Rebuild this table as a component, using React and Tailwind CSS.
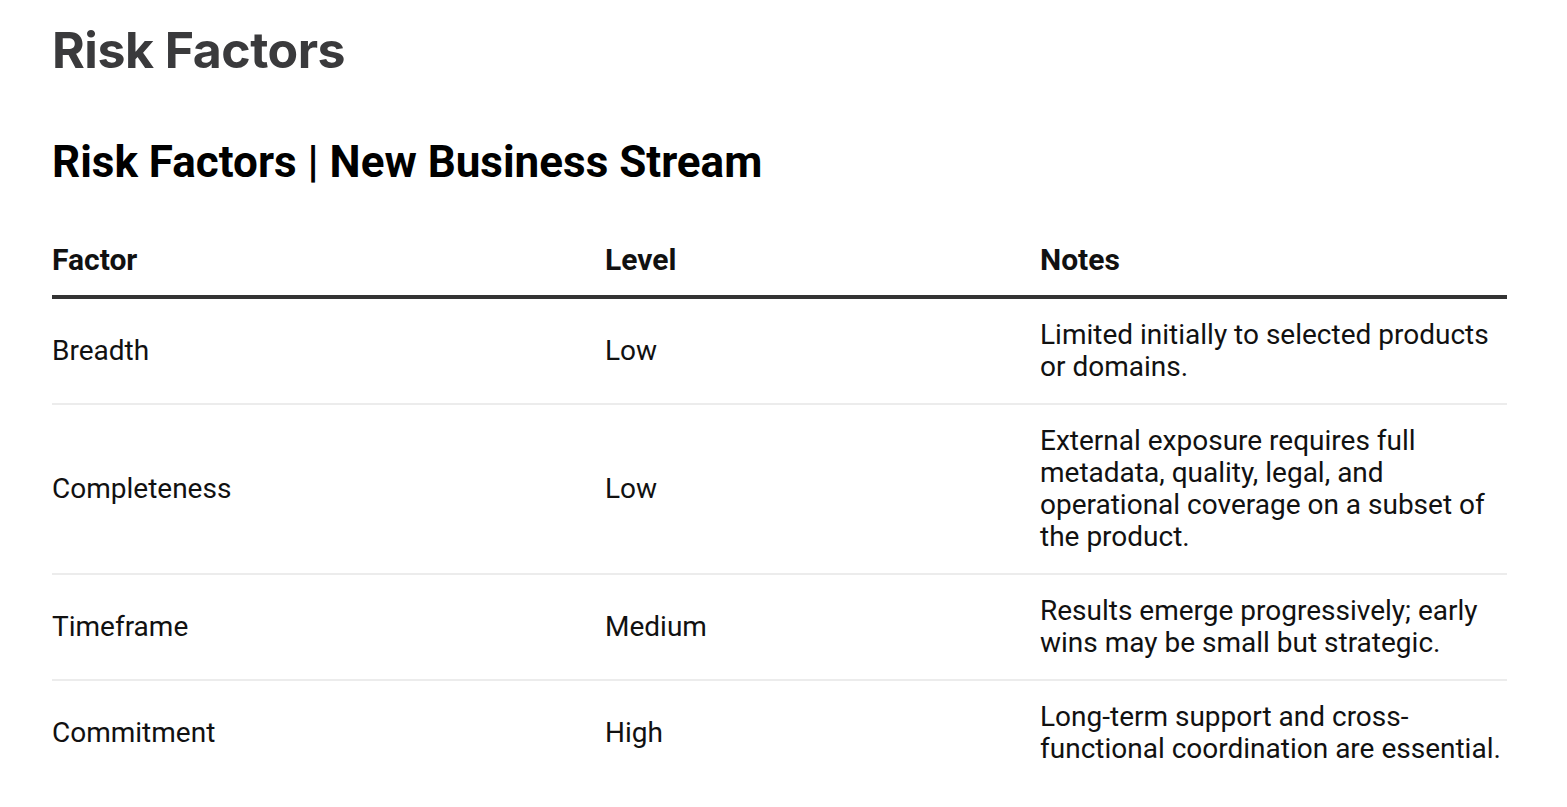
const rows = [
  {
    factor: "Breadth",
    level: "Low",
    notes: "Limited initially to selected products or domains.",
  },
  {
    factor: "Completeness",
    level: "Low",
    notes:
      "External exposure requires full metadata, quality, legal, and operational coverage on a subset of the product.",
  },
  {
    factor: "Timeframe",
    level: "Medium",
    notes: "Results emerge progressively; early wins may be small but strategic.",
  },
  {
    factor: "Commitment",
    level: "High",
    notes: "Long-term support and cross-functional coordination are essential.",
  },
];

const App = () => {
  return (
    <div className="w-full min-h-screen bg-white px-[52px] pt-[22px] font-['Roboto',sans-serif]">
      <h1 className="text-[50px] leading-[56px] font-bold text-[#3a3a3c] font-['Inter',sans-serif] tracking-[-0.5px]">
        Risk Factors
      </h1>

      <h2 className="mt-[58px] text-[44px] leading-[52px] font-bold text-black">
        Risk Factors | New Business Stream
      </h2>

      <table className="mt-[44px] w-[1455px] border-collapse text-[28px] leading-[32px] text-[#111]">
        <colgroup>
          <col className="w-[553px]" />
          <col className="w-[435px]" />
          <col className="w-[467px]" />
        </colgroup>
        <thead>
          {/* header rule is thick and dark */}
          <tr className="border-b-[4px] border-[#333]">
            <th className="text-left text-[30px] leading-[36px] font-bold pt-[10px] pb-[17px]">Factor</th>
            <th className="text-left text-[30px] leading-[36px] font-bold pt-[10px] pb-[17px]">Level</th>
            <th className="text-left text-[30px] leading-[36px] font-bold pt-[10px] pb-[17px]">Notes</th>
          </tr>
        </thead>
        <tbody>
          {rows.map((r, i) => (
            <tr
              key={r.factor}
              className={i < rows.length - 1 ? "border-b-2 border-[#ececec]" : ""}
            >
              <td className="py-[20px] align-middle">{r.factor}</td>
              <td className="py-[20px] align-middle">{r.level}</td>
              <td className="py-[20px] align-middle">{r.notes}</td>
            </tr>
          ))}
        </tbody>
      </table>
    </div>
  );
};

export default App;
